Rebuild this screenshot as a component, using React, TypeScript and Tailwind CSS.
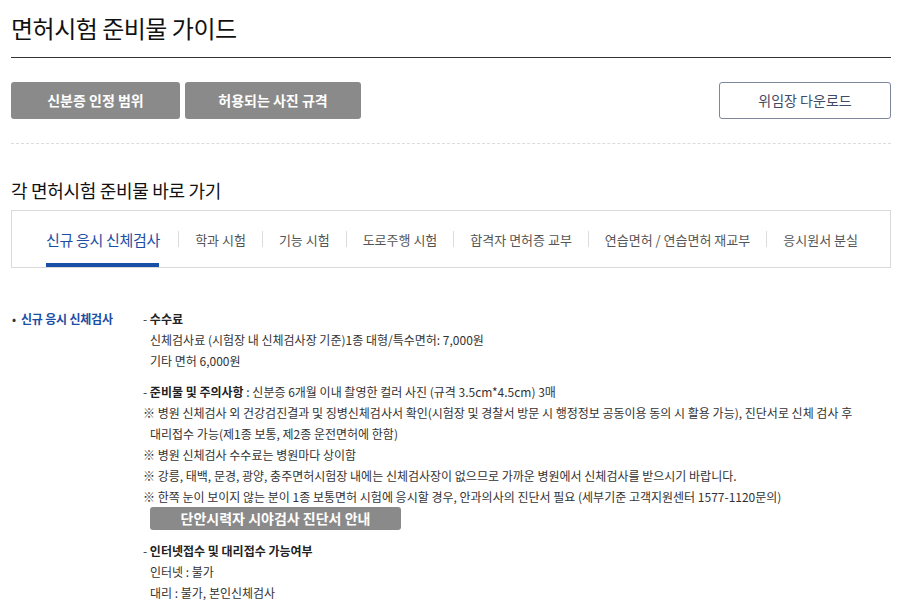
import React from 'react';

const font = { fontFamily: '"Noto Sans CJK KR", "Noto Sans", sans-serif' };

const tabs = ['신규 응시 신체검사', '학과 시험', '기능 시험', '도로주행 시험', '합격자 면허증 교부', '연습면허 / 연습면허 재교부', '응시원서 분실'];

export default function App() {
  return (
    <div className="min-h-screen bg-white px-[11px] pt-[12px] text-[#333]" style={font}>
      <h1 className="text-[24px] font-normal leading-[32px] tracking-[-0.5px] text-[#111]">면허시험 준비물 가이드</h1>
      <div className="mt-[13px] h-px w-[880px] bg-[#333]" />

      <div className="mt-[24px] flex w-[880px] items-center">
        <button className="h-[37px] w-[169px] rounded-[3px] bg-[#8a8a8a] text-[14px] font-bold text-white">신분증 인정 범위</button>
        <button className="ml-[5px] h-[37px] w-[176px] rounded-[3px] bg-[#8a8a8a] text-[14px] font-bold text-white">허용되는 사진 규격</button>
        <button className="ml-auto h-[37px] w-[172px] rounded-[3px] border border-[#7d879b] bg-white text-[14px] text-[#3f4b66]">위임장 다운로드</button>
      </div>

      <div className="mt-[24px] w-[880px] border-t border-dashed border-[#dcdcdc]" />

      <h2 className="mt-[34px] text-[18px] font-normal leading-[24px] tracking-[-0.3px] text-[#111]">각 면허시험 준비물 바로 가기</h2>

      <div className="mt-[8px] flex h-[58px] w-[880px] items-stretch border border-[#d9d9d9] pl-[34px]">
        {tabs.map((t, i) => (
          <div key={t} className="flex items-center">
            {i > 0 && <span className="h-[16px] w-px bg-[#dcdcdc]" />}
            {i === 0 ? (
              <div className="relative flex h-full items-center pr-[18px]">
                <span className="text-[15px] leading-none tracking-[-0.3px] text-[#1b4ea3]">{t}</span>
                <span className="absolute bottom-0 left-0 h-[4px] w-[113px] bg-[#1a4fa6]" />
              </div>
            ) : (
              <span className="px-[16px] text-[13px] leading-none text-[#555]">{t}</span>
            )}
          </div>
        ))}
      </div>

      <div className="mt-[40px] flex text-[12px] leading-[21px]">
        <div className="flex w-[132px] items-start">
          <span className="w-[10px] pl-[1px] text-[#333]">•</span>
          <span className="font-bold tracking-[-0.2px] text-[#1b4ea3]">신규 응시 신체검사</span>
        </div>
        <div className="flex-1">
          <p>- <b className="text-[#222]">수수료</b></p>
          <p className="pl-[7px]">신체검사료 (시험장 내 신체검사장 기준)1종 대형/특수면허: 7,000원</p>
          <p className="pl-[7px]">기타 면허 6,000원</p>

          <p className="mt-[10px]">- <b className="text-[#222]">준비물 및 주의사항</b> : 신분증 6개월 이내 촬영한 컬러 사진 (규격 3.5cm*4.5cm) 3매</p>
          <p>※ 병원 신체검사 외 건강검진결과 및 징병신체검사서 확인(시험장 및 경찰서 방문 시 행정정보 공동이용 동의 시 활용 가능), 진단서로 신체 검사 후</p>
          <p className="pl-[7px]">대리접수 가능(제1종 보통, 제2종 운전면허에 한함)</p>
          <p>※ 병원 신체검사 수수료는 병원마다 상이함</p>
          <p>※ 강릉, 태백, 문경, 광양, 충주면허시험장 내에는 신체검사장이 없으므로 가까운 병원에서 신체검사를 받으시기 바랍니다.</p>
          <p>※ 한쪽 눈이 보이지 않는 분이 1종 보통면허 시험에 응시할 경우, 안과의사의 진단서 필요 (세부기준 고객지원센터 1577-1120문의)</p>
          <button className="ml-[7px] block h-[23px] w-[251px] rounded-[3px] bg-[#8a8a8a] text-[14px] font-bold leading-[23px] text-white">단안시력자 시야검사 진단서 안내</button>

          <p className="mt-[10px]">- <b className="text-[#222]">인터넷접수 및 대리접수 가능여부</b></p>
          <p className="pl-[7px]">인터넷 : 불가</p>
          <p className="pl-[7px]">대리 : 불가, 본인신체검사</p>
        </div>
      </div>
    </div>
  );
}
